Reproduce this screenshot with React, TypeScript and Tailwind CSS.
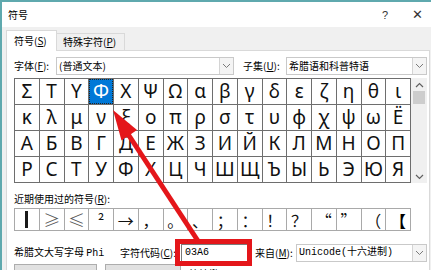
import React from "react";

const rows: string[][] = [
  "ΣΤΥΦΧΨΩαβγδεζηθι".split(""),
  "κλμνξοπρστυφχψωЁ".split(""),
  "АБВГДЕЖЗИЙКЛМНОП".split(""),
  "РСТУФХЦЧШЩЪЫЬЭЮЯ".split(""),
];

const recent = ["|", "≥", "≤", "²", "→", "，", "。", "、", "；", "：", "！", "？", "“", "”", "（", "【"];

const Chevron = () => (
  <svg width="9" height="6" viewBox="0 0 9 6">
    <path d="M1 1 L4.5 4.5 L8 1" fill="none" stroke="#7a7a7a" strokeWidth="1" />
  </svg>
);

const Combo = ({ w, children, mono }: { w: string; children: React.ReactNode; mono?: boolean }) => (
  <div className={`${w} h-[18px] bg-white border border-[#c9c9c9] flex items-center`}>
    <div
      className={`flex-1 pl-[2px] whitespace-nowrap overflow-hidden ${
        mono ? "font-['Liberation_Mono','Noto_Sans_CJK_SC',monospace] text-[10px]" : ""
      }`}
    >
      {children}
    </div>
    <div className="w-[14px] h-[16px] border-l border-[#d4d4d4] bg-[#f4f4f4] flex items-center justify-center">
      <Chevron />
    </div>
  </div>
);

export default function App() {
  return (
    <div className="relative w-[431px] h-[270px] overflow-hidden">
      <div className="w-[431px] h-[270px] bg-[#f0f0f0] border-t-2 border-l-2 border-[#5fa9ae] font-['Noto_Sans_CJK_SC',sans-serif] text-[10px] leading-[14px] text-black">
        {/* Title bar */}
        <div className="h-[25px] bg-white flex items-center pl-[6px] pr-[8px]">
          <span className="text-[10px]">符号</span>
          <span className="ml-auto text-[11px] font-['Liberation_Sans',sans-serif] text-[#333]">?</span>
          <span className="ml-[24px] text-[13px] font-['Liberation_Sans',sans-serif] text-[#333]">✕</span>
        </div>
        {/* Tabs */}
        <div className="h-[23px] flex items-end pl-[4px]">
          <div className="relative z-10 h-[21px] -mb-[1px] w-[51px] bg-white border border-b-0 border-[#d9d9d9] flex items-center pl-[7px] pb-[1px]">
            符号(<span className="underline">S</span>)
          </div>
          <div className="h-[17px] w-[68px] bg-[#f0f0f0] border border-l-0 border-b-0 border-[#d9d9d9] flex items-center pl-[6px]">
            特殊字符(<span className="underline">P</span>)
          </div>
        </div>
        {/* Panel */}
        <div className="ml-[4px] w-[424px] h-[230px] bg-white border border-[#d9d9d9] pl-[7px] pt-[6px]">
          {/* Font row */}
          <div className="flex items-center h-[18px]">
            <div className="w-[42px] whitespace-nowrap">
              字体(<span className="underline">F</span>):
            </div>
            <Combo w="w-[178px]">(普通文本)</Combo>
            <div className="ml-[9px] w-[43px] whitespace-nowrap">
              子集(<span className="underline">U</span>):
            </div>
            <Combo w="w-[141px]">希腊语和科普特语</Combo>
          </div>
          {/* Grid + scrollbar */}
          <div className="mt-[3px] flex">
            <div className="w-[397px] grid grid-cols-16 border-l border-t border-[#6e6e6e] font-['Noto_Sans',sans-serif] text-[19px] leading-none">
              {rows.map((r, ri) =>
                r.map((c, ci) => {
                  const sel = ri === 0 && ci === 3;
                  return (
                    <div
                      key={`${ri}-${ci}`}
                      className="h-[26px] border-r border-b border-[#6e6e6e] flex items-center justify-center"
                    >
                      {sel ? (
                        <div className="w-full h-full bg-[#0078d7] text-white flex items-center justify-center outline outline-1 outline-dotted outline-[#222] -outline-offset-1">
                          {c}
                        </div>
                      ) : (
                        <span className="text-[#111]">{c}</span>
                      )}
                    </div>
                  );
                })
              )}
            </div>
            <div className="w-[16px] h-[105px] bg-[#f0f0f0] flex flex-col items-center">
              <div className="h-[13px] flex items-center justify-center">
                <svg width="9" height="6" viewBox="0 0 9 6">
                  <path d="M1 5 L4.5 1.5 L8 5" fill="none" stroke="#606060" strokeWidth="1.2" />
                </svg>
              </div>
              <div className="w-[12px] h-[13px] bg-[#cdcdcd]" />
              <div className="flex-1" />
              <div className="h-[13px] flex items-center justify-center">
                <svg width="9" height="6" viewBox="0 0 9 6">
                  <path d="M1 1 L4.5 4.5 L8 1" fill="none" stroke="#606060" strokeWidth="1.2" />
                </svg>
              </div>
            </div>
          </div>
          {/* Recent label */}
          <div className="mt-[8px] h-[16px] flex items-center">
            近期使用过的符号(<span className="underline">R</span>):
          </div>
          {/* Recent row */}
          <div className="mt-[1px] w-[397px] grid grid-cols-16 border-l border-t border-[#a9a9a9] font-['Noto_Sans_CJK_SC',sans-serif] text-[16px] leading-none">
            {recent.map((c, i) => (
              <div
                key={i}
                className="h-[22px] border-r border-b border-[#a9a9a9] flex items-center justify-center"
              >
                {i === 0 ? (
                  <div className="w-[3px] h-[17px] bg-[#1a1a1a]" />
                ) : i === 1 || i === 2 ? (
                  <span className="text-[#555] text-[17px] font-light">{c}</span>
                ) : i === 15 ? (
                  <span className="font-bold">{c}</span>
                ) : (
                  <span className="text-[#111]">{c}</span>
                )}
              </div>
            ))}
          </div>
          {/* Info row */}
          <div className="mt-[13px] h-[18px] flex items-center">
            <div className="w-[106px] whitespace-nowrap">
              希腊文大写字母 <span className="font-['Liberation_Mono',monospace] text-[10px]">Phi</span>
            </div>
            <div className="w-[61px] whitespace-nowrap">
              字符代码(<span className="underline">C</span>):
            </div>
            <div className="w-[68px] h-[18px] bg-white border border-[#7a7a7a] flex items-center pl-[3px] font-['Liberation_Mono',monospace] text-[10px]">
              03A6
            </div>
            <div className="ml-[6px] w-[41px] whitespace-nowrap">
              来自(<span className="underline">M</span>):
            </div>
            <Combo w="w-[131px]" mono>
              Unicode(十六进制)
            </Combo>
          </div>
          {/* Buttons */}
          <div className="mt-[2px] flex items-start">
            <div className="w-[83px] h-[22px] bg-[#e1e1e1] border border-[#adadad] flex items-start justify-center pt-[3px]">
              自动更正(<span className="underline">A</span>)...
            </div>
            <div className="ml-[8px] w-[76px] h-[22px] bg-[#e1e1e1] border border-[#adadad] flex items-start justify-center pt-[3px]">
              快捷键(<span className="underline">K</span>)...
            </div>
            <div className="ml-[8px] pt-[3px] whitespace-nowrap">
              快捷键: <span className="font-['Liberation_Mono',monospace]">2016, Alt+X</span>
            </div>
          </div>
        </div>
      </div>
      {/* Red annotation overlay */}
      <svg className="absolute left-0 top-0 pointer-events-none" width="431" height="270" viewBox="0 0 431 270">
        <rect x="177.5" y="241.5" width="72" height="22" fill="none" stroke="#e4161a" strokeWidth="5" />
        <line x1="126" y1="131" x2="198" y2="241" stroke="#e4161a" strokeWidth="5" />
        <polygon points="113,110 137,130 121.5,140.5" fill="#e4161a" />
      </svg>
    </div>
  );
}
